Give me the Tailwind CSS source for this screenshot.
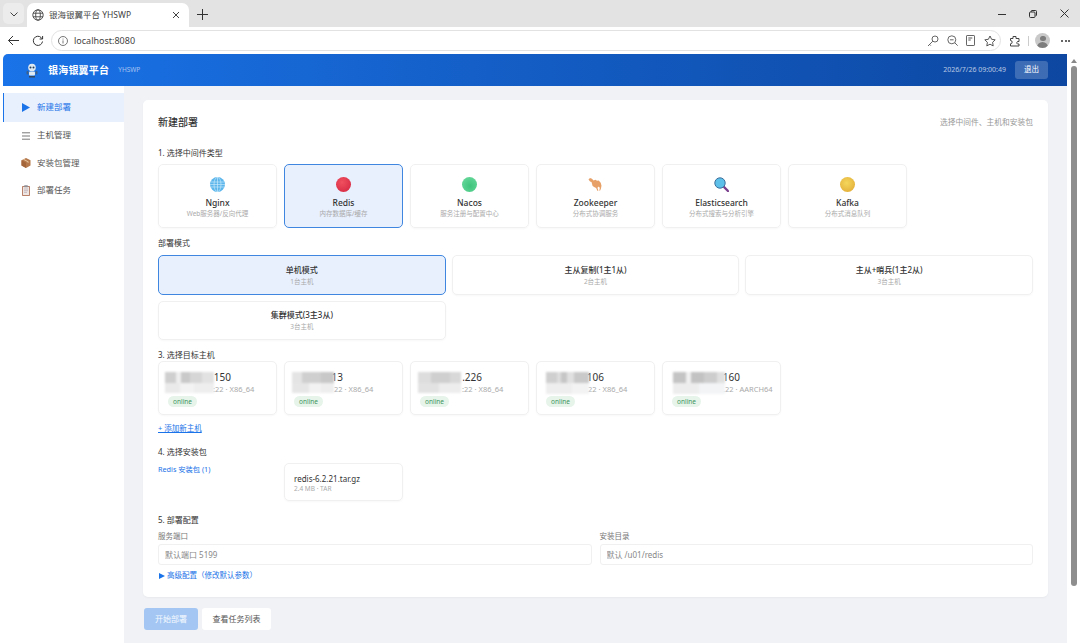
<!DOCTYPE html>
<html lang="zh-CN">
<head>
    <meta charset="UTF-8">
    <meta name="viewport" content="width=device-width, initial-scale=1.0">
    <title>银海银翼平台 YHSWP</title>
    <script src="https://cdn.jsdelivr.net/npm/@tailwindcss/browser@4"></script>
</head>
<body class="w-[1080px] h-[643px] overflow-hidden bg-white font-['Noto_Sans','Noto_Sans_CJK_SC',sans-serif] text-[#333]">

<!-- tab strip -->
<div class="h-[27px] bg-[#e3e3e3] flex items-end pl-[3px]">
  <div class="w-[21px] h-[21px] mb-[3px] rounded-[5px] bg-[#ececec] flex items-center justify-center">
    <svg class="w-[10px] h-[10px]" viewBox="0 0 10 10" fill="none" stroke="#444" stroke-width="1"><path d="M1.5 3.5 5 7l3.5-3.5"/></svg>
  </div>
  <div class="w-[162px] h-[24px] ml-[3px] bg-white rounded-t-[7px] flex items-center pl-[5px] pr-[9px]">
    <svg class="w-[12px] h-[12px] shrink-0" viewBox="0 0 12 12" fill="none" stroke="#444" stroke-width=".9"><circle cx="6" cy="6" r="5.2"/><ellipse cx="6" cy="6" rx="2.3" ry="5.2"/><path d="M1 4.2h10M1 7.8h10"/></svg>
    <span class="ml-[5px] text-[8.5px] text-[#444] whitespace-nowrap">银海银翼平台 YHSWP</span>
    <svg class="ml-auto w-[8px] h-[8px]" viewBox="0 0 8 8" stroke="#444" stroke-width="1"><path d="M1 1l6 6M7 1 1 7"/></svg>
  </div>
  <svg class="w-[11px] h-[11px] ml-[8px] mb-[7px]" viewBox="0 0 11 11" stroke="#333" stroke-width="1"><path d="M5.5 0v11M0 5.5h11"/></svg>
  <div class="ml-auto flex items-center h-[27px] gap-[23px] pr-[11px]">
    <svg class="w-[8px] h-[8px]" viewBox="0 0 8 8" stroke="#333" stroke-width="1"><path d="M0 4.5h8"/></svg>
    <svg class="w-[8px] h-[8px]" viewBox="0 0 8 8" fill="none" stroke="#333" stroke-width="1"><rect x=".5" y="2" width="5.5" height="5.5" rx="1"/><path d="M2.2 2V1.2Q2.2.5 3 .5h3.6q.9 0 .9.9V5q0 .8-.8.8"/></svg>
    <svg class="w-[9px] h-[9px]" viewBox="0 0 9 9" stroke="#333" stroke-width="1"><path d="M.5.5l8 8M8.5.5l-8 8"/></svg>
  </div>
</div>

<!-- address bar -->
<div class="h-[27px] bg-white flex items-center pl-[7px] pr-[9px]">
  <svg class="w-[13px] h-[13px]" viewBox="0 0 13 13" fill="none" stroke="#333" stroke-width="1"><path d="M12 6.5H1.5M6 2 1.5 6.5 6 11"/></svg>
  <svg class="w-[12px] h-[12px] ml-[12px]" viewBox="0 0 12 12" fill="none" stroke="#333" stroke-width="1"><path d="M10.5 6.5A4.6 4.6 0 1 1 9.2 2.6L10.6 4M10.6 1v3h-3"/></svg>
  <div class="ml-[7px] w-[950px] h-[21px] rounded-full border border-[#e2e2e2] flex items-center pl-[6px] pr-[4px]">
    <svg class="w-[10px] h-[10px]" viewBox="0 0 10 10" fill="none" stroke="#555" stroke-width=".8"><circle cx="5" cy="5" r="4.5"/><path d="M5 4.4V7.5M5 2.6v.9"/></svg>
    <span class="ml-[6px] text-[9px] text-[#444]">localhost:8080</span>
    <div class="ml-auto flex items-center gap-[8px]">
      <svg class="w-[12px] h-[12px]" viewBox="0 0 12 12" fill="none" stroke="#555" stroke-width=".9"><circle cx="8" cy="4" r="3"/><path d="M5.8 6.2 1 11M2.6 9.4l1.2 1.2"/></svg>
      <svg class="w-[11px] h-[11px]" viewBox="0 0 11 11" fill="none" stroke="#555" stroke-width=".9"><circle cx="4.8" cy="4.8" r="4"/><path d="M7.8 7.8 10.7 10.7M3 4.8h3.6"/></svg>
      <svg class="w-[10px] h-[11px]" viewBox="0 0 10 11" fill="none" stroke="#555" stroke-width=".9"><rect x=".5" y=".5" width="8" height="10" rx=".6"/><path d="M2.3 3h4M2.3 5h2.4" stroke-width="1.2"/></svg>
      <svg class="w-[12px] h-[12px]" viewBox="0 0 12 12" fill="none" stroke="#444" stroke-width=".9"><path d="M6 1l1.6 3.3 3.6.5-2.6 2.5.6 3.6L6 9.2l-3.2 1.7.6-3.6L.8 4.8l3.6-.5z"/></svg>
    </div>
  </div>
  <svg class="ml-[8px] w-[11px] h-[12px]" viewBox="0 0 11 12" fill="none" stroke="#444" stroke-width="1"><path d="M4 1.500h3v2h3v3H8.500a1.500 1.500 0 0 0 0 2.500H10v2H1.500V8.800a1.600 1.600 0 0 0 0-3.300V3.500H4z"/></svg>
  <div class="ml-[8px] w-px h-[10px] bg-[#ccc]"></div>
  <div class="ml-[6px] w-[15px] h-[15px] rounded-full bg-[#c9c9c9] overflow-hidden flex flex-col items-center">
    <div class="w-[6px] h-[6px] mt-[2.5px] rounded-full bg-[#7d7d7d]"></div>
    <div class="w-[11px] h-[6px] mt-px rounded-t-full bg-[#7d7d7d]"></div>
  </div>
  <span class="ml-[11px] flex gap-[1.5px]"><i class="w-[2px] h-[2px] rounded-full bg-[#333]"></i><i class="w-[2px] h-[2px] rounded-full bg-[#333]"></i><i class="w-[2px] h-[2px] rounded-full bg-[#333]"></i></span>
</div>

<div class="flex h-[589px] pl-[3px] bg-white">
  <div class="w-[1064px] flex flex-col bg-[#f0f2f5] rounded-tl-[5px] overflow-hidden">

    <!-- app header -->
    <header class="h-[32px] shrink-0 bg-gradient-to-r from-[#1a73e8] to-[#0d47a1] flex items-center pl-[22px] pr-[19px] text-white">
      <svg class="w-[14px] h-[15px]" viewBox="0 0 14 15">
        <circle cx="7" cy="4.5" r="3.8" fill="#dfe9f2"/>
        <circle cx="5.5" cy="4.5" r="1" fill="#24405c"/><circle cx="8.5" cy="4.5" r="1" fill="#24405c"/>
        <rect x="4" y="8.5" width="6" height="4" rx="1" fill="#dfe9f2"/>
        <rect x="1.5" y="8" width="2" height="3.5" rx="1" fill="#3f5f86"/><rect x="10.5" y="8" width="2" height="3.5" rx="1" fill="#3f5f86"/>
        <rect x="4" y="13" width="6" height="1.5" fill="#33475f"/>
      </svg>
      <span class="ml-[9px] text-[10px] font-bold tracking-[0.2px] whitespace-nowrap">银海银翼平台</span>
      <span class="ml-[9px] text-[6.5px] text-white/60">YHSWP</span>
      <span class="ml-auto text-[7px] text-white/70 whitespace-nowrap">2026/7/26 09:00:49</span>
      <button class="ml-[9px] w-[33px] h-[18px] rounded-[3px] bg-white/20 text-[7.5px] text-white">退出</button>
    </header>

    <div class="flex flex-1 min-h-0">
      <!-- sidebar -->
      <aside class="w-[121px] shrink-0 bg-white pt-[7px] text-[8.5px] text-[#555]">
        <div class="h-[29px] flex items-center pl-[18px] bg-[#e8f0fe] border-l border-[#1a73e8] text-[#1a73e8]">
          <svg class="w-[8px] h-[9px]" viewBox="0 0 8 9" fill="#1a73e8"><path d="M0 0l8 4.500L0 9z"/></svg>
          <span class="ml-[7px]">新建部署</span>
        </div>
        <div class="h-[27.5px] flex items-center pl-[19px]">
          <svg class="w-[8px] h-[8px]" viewBox="0 0 8 8" stroke="#555" stroke-width=".8"><path d="M0 .8h8M0 4h8M0 7.200h8"/></svg>
          <span class="ml-[7px]">主机管理</span>
        </div>
        <div class="h-[27.5px] flex items-center pl-[18px]">
          <svg class="w-[10px] h-[10px]" viewBox="0 0 10 10"><path d="M5 0 9.500 2.300v5.200L5 10 .5 7.500V2.300z" fill="#b5784a"/><path d="M.5 2.300 5 4.800V10L.5 7.500z" fill="#a5653a"/><path d="M3 1 7.500 3.400V5L6.500 4.500V3.900L2 1.500z" fill="#e8c8a0"/></svg>
          <span class="ml-[6px]">安装包管理</span>
        </div>
        <div class="h-[27.5px] flex items-center pl-[18px]">
          <svg class="w-[10px] h-[11px]" viewBox="0 0 10 11"><rect x="1" y="1" width="8" height="10" rx=".8" fill="#b9806a"/><rect x="2" y="2" width="6" height="8" fill="#eee6e2"/><rect x="3.200" y=".2" width="3.600" height="2" rx=".5" fill="#8f8f96"/><path d="M3 4h4M3 5.700h4M3 7.400h3" stroke="#b4a8b4" stroke-width=".7"/></svg>
          <span class="ml-[6px]">部署任务</span>
        </div>
      </aside>

      <!-- main -->
      <main class="flex-1 pl-[19px] pr-[19px] pt-[14px]">
        <section class="h-[497px] bg-white rounded-[5px] shadow-[0_1px_2px_rgba(0,0,0,0.04)] px-[15px] pt-[15px]">
          <div class="flex items-center justify-between h-[15px]">
            <h2 class="text-[10px] font-medium text-[#333]">新建部署</h2>
            <span class="text-[7.75px] text-[#999]">选择中间件、主机和安装包</span>
          </div>

          <h3 class="mt-[17px] h-[12px] leading-[12px] text-[8px] text-[#333]">1. 选择中间件类型</h3>
          <div class="mt-[5px] grid grid-cols-[repeat(6,119px)] gap-x-[7px]">
            <div class="h-[64px] rounded-[5px] border border-[#f0f0f0] shadow-[0_1px_2px_rgba(0,0,0,0.03)] flex flex-col items-center pt-[12px]">
              <svg class="w-[15px] h-[15px]" viewBox="0 0 15 15" fill="none"><circle cx="7.5" cy="7.5" r="7.5" fill="#5cb6ec"/><g stroke="#d4eefb" stroke-width=".6"><ellipse cx="7.5" cy="7.5" rx="3.5" ry="7.2"/><path d="M7.5 0v15M.5 5h14M.5 10h14M0 7.5h15"/></g></svg>
              <span class="mt-[5px] text-[8.5px] leading-[12px] font-medium text-[#333]">Nginx</span>
              <span class="text-[6.5px] leading-[10px] text-[#aaa]">Web服务器/反向代理</span>
            </div>
            <div class="h-[64px] rounded-[5px] border-[1.5px] border-[#3f86e0] bg-[#e8f0fe] flex flex-col items-center pt-[11.5px]">
              <div class="w-[15px] h-[15px] rounded-full bg-[radial-gradient(circle_at_40%_35%,#f0505f,#d2233f)]"></div>
              <span class="mt-[5px] text-[8.5px] leading-[12px] font-medium text-[#333]">Redis</span>
              <span class="text-[6.5px] leading-[10px] text-[#aaa]">内存数据库/缓存</span>
            </div>
            <div class="h-[64px] rounded-[5px] border border-[#f0f0f0] shadow-[0_1px_2px_rgba(0,0,0,0.03)] flex flex-col items-center pt-[12px]">
              <div class="w-[15px] h-[15px] rounded-full bg-[radial-gradient(circle_at_55%_60%,#3fc47d,#6fdca0)]"></div>
              <span class="mt-[5px] text-[8.5px] leading-[12px] font-medium text-[#333]">Nacos</span>
              <span class="text-[6.5px] leading-[10px] text-[#aaa]">服务注册与配置中心</span>
            </div>
            <div class="h-[64px] rounded-[5px] border border-[#f0f0f0] shadow-[0_1px_2px_rgba(0,0,0,0.03)] flex flex-col items-center pt-[12px]">
              <svg class="w-[15px] h-[15px]" viewBox="0 0 15 15" fill="#e7a067"><path d="M.5 2.5 2 1l2 .8 1.5 1.700 2-.8 1.5 1 1.700-.3 2 2.300.8 3-.6 3-.9 2-.7-.2.5-2.500-.9-1.500-1.500 1.200 1 2.800-.9.4-1.400-2.800-2-1-1.500-1.200L3.500 5 2 4.500z"/></svg>
              <span class="mt-[5px] text-[8.5px] leading-[12px] font-medium text-[#333]">Zookeeper</span>
              <span class="text-[6.5px] leading-[10px] text-[#aaa]">分布式协调服务</span>
            </div>
            <div class="h-[64px] rounded-[5px] border border-[#f0f0f0] shadow-[0_1px_2px_rgba(0,0,0,0.03)] flex flex-col items-center pt-[12px]">
              <svg class="w-[15px] h-[15px]" viewBox="0 0 15 15"><path d="M9.5 9.5 14 14" stroke="#7a3f8c" stroke-width="2.4" stroke-linecap="round"/><circle cx="6" cy="6" r="5.200" fill="#5cc0e8" stroke="#3d6f9c" stroke-width="1"/></svg>
              <span class="mt-[5px] text-[8.5px] leading-[12px] font-medium text-[#333]">Elasticsearch</span>
              <span class="text-[6.5px] leading-[10px] text-[#aaa]">分布式搜索与分析引擎</span>
            </div>
            <div class="h-[64px] rounded-[5px] border border-[#f0f0f0] shadow-[0_1px_2px_rgba(0,0,0,0.03)] flex flex-col items-center pt-[12px]">
              <div class="w-[15px] h-[15px] rounded-full bg-[radial-gradient(circle_at_45%_40%,#f5d75c,#dfa632)]"></div>
              <span class="mt-[5px] text-[8.5px] leading-[12px] font-medium text-[#333]">Kafka</span>
              <span class="text-[6.5px] leading-[10px] text-[#aaa]">分布式消息队列</span>
            </div>
          </div>

          <h3 class="mt-[9px] h-[12px] leading-[12px] text-[8px] text-[#333]">部署模式</h3>
          <div class="mt-[6px] grid grid-cols-3 gap-x-[6px] gap-y-[6px]">
            <div class="h-[40px] rounded-[5px] border-[1.5px] border-[#3f86e0] bg-[#e8f0fe] flex flex-col items-center justify-center">
              <span class="text-[8px] leading-[12px] font-medium text-[#333]">单机模式</span>
              <span class="mt-[1px] text-[6.5px] leading-[10px] text-[#aaa]">1台主机</span>
            </div>
            <div class="h-[40px] rounded-[5px] border border-[#f0f0f0] shadow-[0_1px_2px_rgba(0,0,0,0.03)] flex flex-col items-center justify-center">
              <span class="text-[8px] leading-[12px] font-medium text-[#333]">主从复制(1主1从)</span>
              <span class="mt-[1px] text-[6.5px] leading-[10px] text-[#aaa]">2台主机</span>
            </div>
            <div class="h-[40px] rounded-[5px] border border-[#f0f0f0] shadow-[0_1px_2px_rgba(0,0,0,0.03)] flex flex-col items-center justify-center">
              <span class="text-[8px] leading-[12px] font-medium text-[#333]">主从+哨兵(1主2从)</span>
              <span class="mt-[1px] text-[6.5px] leading-[10px] text-[#aaa]">3台主机</span>
            </div>
            <div class="h-[39px] rounded-[5px] border border-[#f0f0f0] shadow-[0_1px_2px_rgba(0,0,0,0.03)] flex flex-col items-center justify-center">
              <span class="text-[8px] leading-[12px] font-medium text-[#333]">集群模式(3主3从)</span>
              <span class="mt-[1px] text-[6.5px] leading-[10px] text-[#aaa]">3台主机</span>
            </div>
          </div>

          <h3 class="mt-[9px] h-[12px] leading-[12px] text-[8px] text-[#333]">3. 选择目标主机</h3>
          <div class="grid grid-cols-[repeat(5,119px)] gap-x-[7px]">
            <div class="relative h-[54px] rounded-[5px] border border-[#f0f0f0] shadow-[0_1px_2px_rgba(0,0,0,0.03)] pl-[10px] pt-[9px]">
              <div class="text-right w-[62px] text-[10px] leading-[13px] text-[#333]">150</div>
              <div class="text-[7.5px] leading-[10px] text-[#aaa] pl-[44px] whitespace-nowrap">:22 · X86_64</div>
              <span class="absolute left-[9px] top-[34px] h-[11px] px-[5px] rounded-full bg-[#e6f4ea] text-[6.5px] leading-[11px] text-[#3f9560]">online</span>
              <div class="absolute left-[6px] top-[10px] w-[49px] h-[21px] blur-[1px]">
                <div class="h-[11px] bg-[linear-gradient(90deg,#cfcfcf_0_22%,#eeeeee_22%_32%,#c9c9c9_32%_52%,#d6d6d6_52%_76%,#e2e2e2_76%_100%)]"></div>
                <div class="h-[10px] bg-[linear-gradient(90deg,#eaeaea_0_30%,#f3f3f3_30%_60%,#eeeeee_60%_100%)]"></div>
              </div>
            </div>
            <div class="relative h-[54px] rounded-[5px] border border-[#f0f0f0] shadow-[0_1px_2px_rgba(0,0,0,0.03)] pl-[10px] pt-[9px]">
              <div class="text-right w-[48px] text-[10px] leading-[13px] text-[#333]">13</div>
              <div class="text-[7.5px] leading-[10px] text-[#aaa] pl-[39px] whitespace-nowrap">22 · X86_64</div>
              <span class="absolute left-[9px] top-[34px] h-[11px] px-[5px] rounded-full bg-[#e6f4ea] text-[6.5px] leading-[11px] text-[#3f9560]">online</span>
              <div class="absolute left-[7px] top-[10px] w-[42px] h-[21px] rounded-[4px] blur-[1px]">
                <div class="h-[11px] bg-[linear-gradient(90deg,#e4e4e4_0_25%,#cfcfcf_25%_70%,#c8c8c8_70%_100%)]"></div>
                <div class="h-[10px] bg-[linear-gradient(90deg,#e6e6e6_0_40%,#f2f2f2_40%_70%,#eeeeee_70%_100%)]"></div>
              </div>
            </div>
            <div class="relative h-[54px] rounded-[5px] border border-[#f0f0f0] shadow-[0_1px_2px_rgba(0,0,0,0.03)] pl-[10px] pt-[9px]">
              <div class="text-right w-[61px] text-[10px] leading-[13px] text-[#333]">.226</div>
              <div class="text-[7.5px] leading-[10px] text-[#aaa] pl-[41px] whitespace-nowrap">:22 · X86_64</div>
              <span class="absolute left-[9px] top-[34px] h-[11px] px-[5px] rounded-full bg-[#e6f4ea] text-[6.5px] leading-[11px] text-[#3f9560]">online</span>
              <div class="absolute left-[7px] top-[10px] w-[43px] h-[21px] rounded-[5px] blur-[1px]">
                <div class="h-[11px] bg-[linear-gradient(90deg,#dddddd_0_30%,#cfcfcf_30%_75%,#d8d8d8_75%_100%)]"></div>
                <div class="h-[10px] bg-[linear-gradient(90deg,#e2e2e2_0_50%,#ededed_50%_100%)]"></div>
              </div>
            </div>
            <div class="relative h-[54px] rounded-[5px] border border-[#f0f0f0] shadow-[0_1px_2px_rgba(0,0,0,0.03)] pl-[10px] pt-[9px]">
              <div class="text-right w-[57px] text-[10px] leading-[13px] text-[#333]">106</div>
              <div class="text-[7.5px] leading-[10px] text-[#aaa] pl-[39px] whitespace-nowrap">.22 · X86_64</div>
              <span class="absolute left-[9px] top-[34px] h-[11px] px-[5px] rounded-full bg-[#e6f4ea] text-[6.5px] leading-[11px] text-[#3f9560]">online</span>
              <div class="absolute left-[9px] top-[10px] w-[43px] h-[22px] blur-[1px]">
                <div class="h-[11px] bg-[linear-gradient(90deg,#cfcfcf_0_25%,#dddddd_25%_35%,#c6c6c6_35%_50%,#e0e0e0_50%_65%,#c9c9c9_65%_100%)]"></div>
                <div class="h-[11px] bg-[linear-gradient(90deg,#eeeeee_0_60%,#f3f3f3_60%_100%)]"></div>
              </div>
            </div>
            <div class="relative h-[54px] rounded-[5px] border border-[#f0f0f0] shadow-[0_1px_2px_rgba(0,0,0,0.03)] pl-[10px] pt-[9px]">
              <div class="text-right w-[67px] text-[10px] leading-[13px] text-[#333]">160</div>
              <div class="text-[7.5px] leading-[10px] text-[#aaa] pl-[50px] whitespace-nowrap">.22 · AARCH64</div>
              <span class="absolute left-[9px] top-[34px] h-[11px] px-[5px] rounded-full bg-[#e6f4ea] text-[6.5px] leading-[11px] text-[#3f9560]">online</span>
              <div class="absolute left-[10px] top-[10px] w-[52px] h-[22px] blur-[1px]">
                <div class="h-[11px] bg-[linear-gradient(90deg,#c4c4c4_0_25%,#f0f0f0_25%_35%,#c2c2c2_35%_60%,#cdcdcd_60%_85%,#e0e0e0_85%_100%)]"></div>
                <div class="h-[11px] bg-[linear-gradient(90deg,#ededed_0_50%,#f2f4f6_50%_100%)]"></div>
              </div>
            </div>
          </div>
          <a class="mt-[7px] block h-[12px] leading-[12px] text-[7.5px] text-[#1a73e8] underline">+ 添加新主机</a>

          <h3 class="mt-[12px] h-[12px] leading-[12px] text-[8px] text-[#333]">4. 选择安装包</h3>
          <div class="mt-[5px] flex">
            <span class="w-[126px] pt-[1px] text-[7.25px] leading-[10px] text-[#1a73e8]">Redis 安装包 (1)</span>
            <div class="w-[119px] h-[38px] rounded-[5px] border border-[#f0f0f0] shadow-[0_1px_2px_rgba(0,0,0,0.03)] pl-[9px] pt-[9px]">
              <div class="text-[8px] leading-[11px] text-[#333]">redis-6.2.21.tar.gz</div>
              <div class="text-[6.5px] leading-[9px] text-[#aaa]">2.4 MB · TAR</div>
            </div>
          </div>

          <h3 class="mt-[13px] h-[12px] leading-[12px] text-[8px] text-[#333]">5. 部署配置</h3>
          <div class="mt-[5px] grid grid-cols-2 gap-x-[8px]">
            <div>
              <label class="block h-[10px] leading-[10px] text-[7.5px] text-[#777]">服务端口</label>
              <input class="mt-[3px] block w-full h-[21px] rounded-[3px] border border-[#f0f0f0] px-[6px] text-[8px] placeholder:text-[#888]" placeholder="默认端口 5199">
            </div>
            <div>
              <label class="block h-[10px] leading-[10px] text-[7.5px] text-[#777]">安装目录</label>
              <input class="mt-[3px] block w-full h-[21px] rounded-[3px] border border-[#f0f0f0] px-[6px] text-[8px] placeholder:text-[#888]" placeholder="默认 /u01/redis">
            </div>
          </div>
          <div class="mt-[5px] flex items-center h-[12px] text-[7.5px] text-[#1a73e8]">
            <svg class="w-[6px] h-[6px] ml-px" viewBox="0 0 6 6" fill="#1a73e8"><path d="M0 0l6 3-6 3z"/></svg>
            <span class="ml-[2px]">高级配置（修改默认参数）</span>
          </div>
        </section>

        <div class="mt-[11px] flex gap-[4px] pl-px">
          <button class="w-[54px] h-[22px] rounded-[3px] bg-[#a3c6f3] text-[8px] text-white/90">开始部署</button>
          <button class="w-[69px] h-[22px] rounded-[3px] bg-white text-[8px] text-[#555]">查看任务列表</button>
        </div>
      </main>
    </div>
  </div>

  <!-- scrollbar -->
  <div class="w-[13px] bg-white flex flex-col items-center pt-[5px]">
    <div class="w-0 h-0 border-x-[3px] border-x-transparent border-b-[4px] border-b-[#888]"></div>
    <div class="mt-[3px] w-[6px] h-[520px] rounded-full bg-[#8e8e8e]"></div>
  </div>
</div>

</body>
</html>
